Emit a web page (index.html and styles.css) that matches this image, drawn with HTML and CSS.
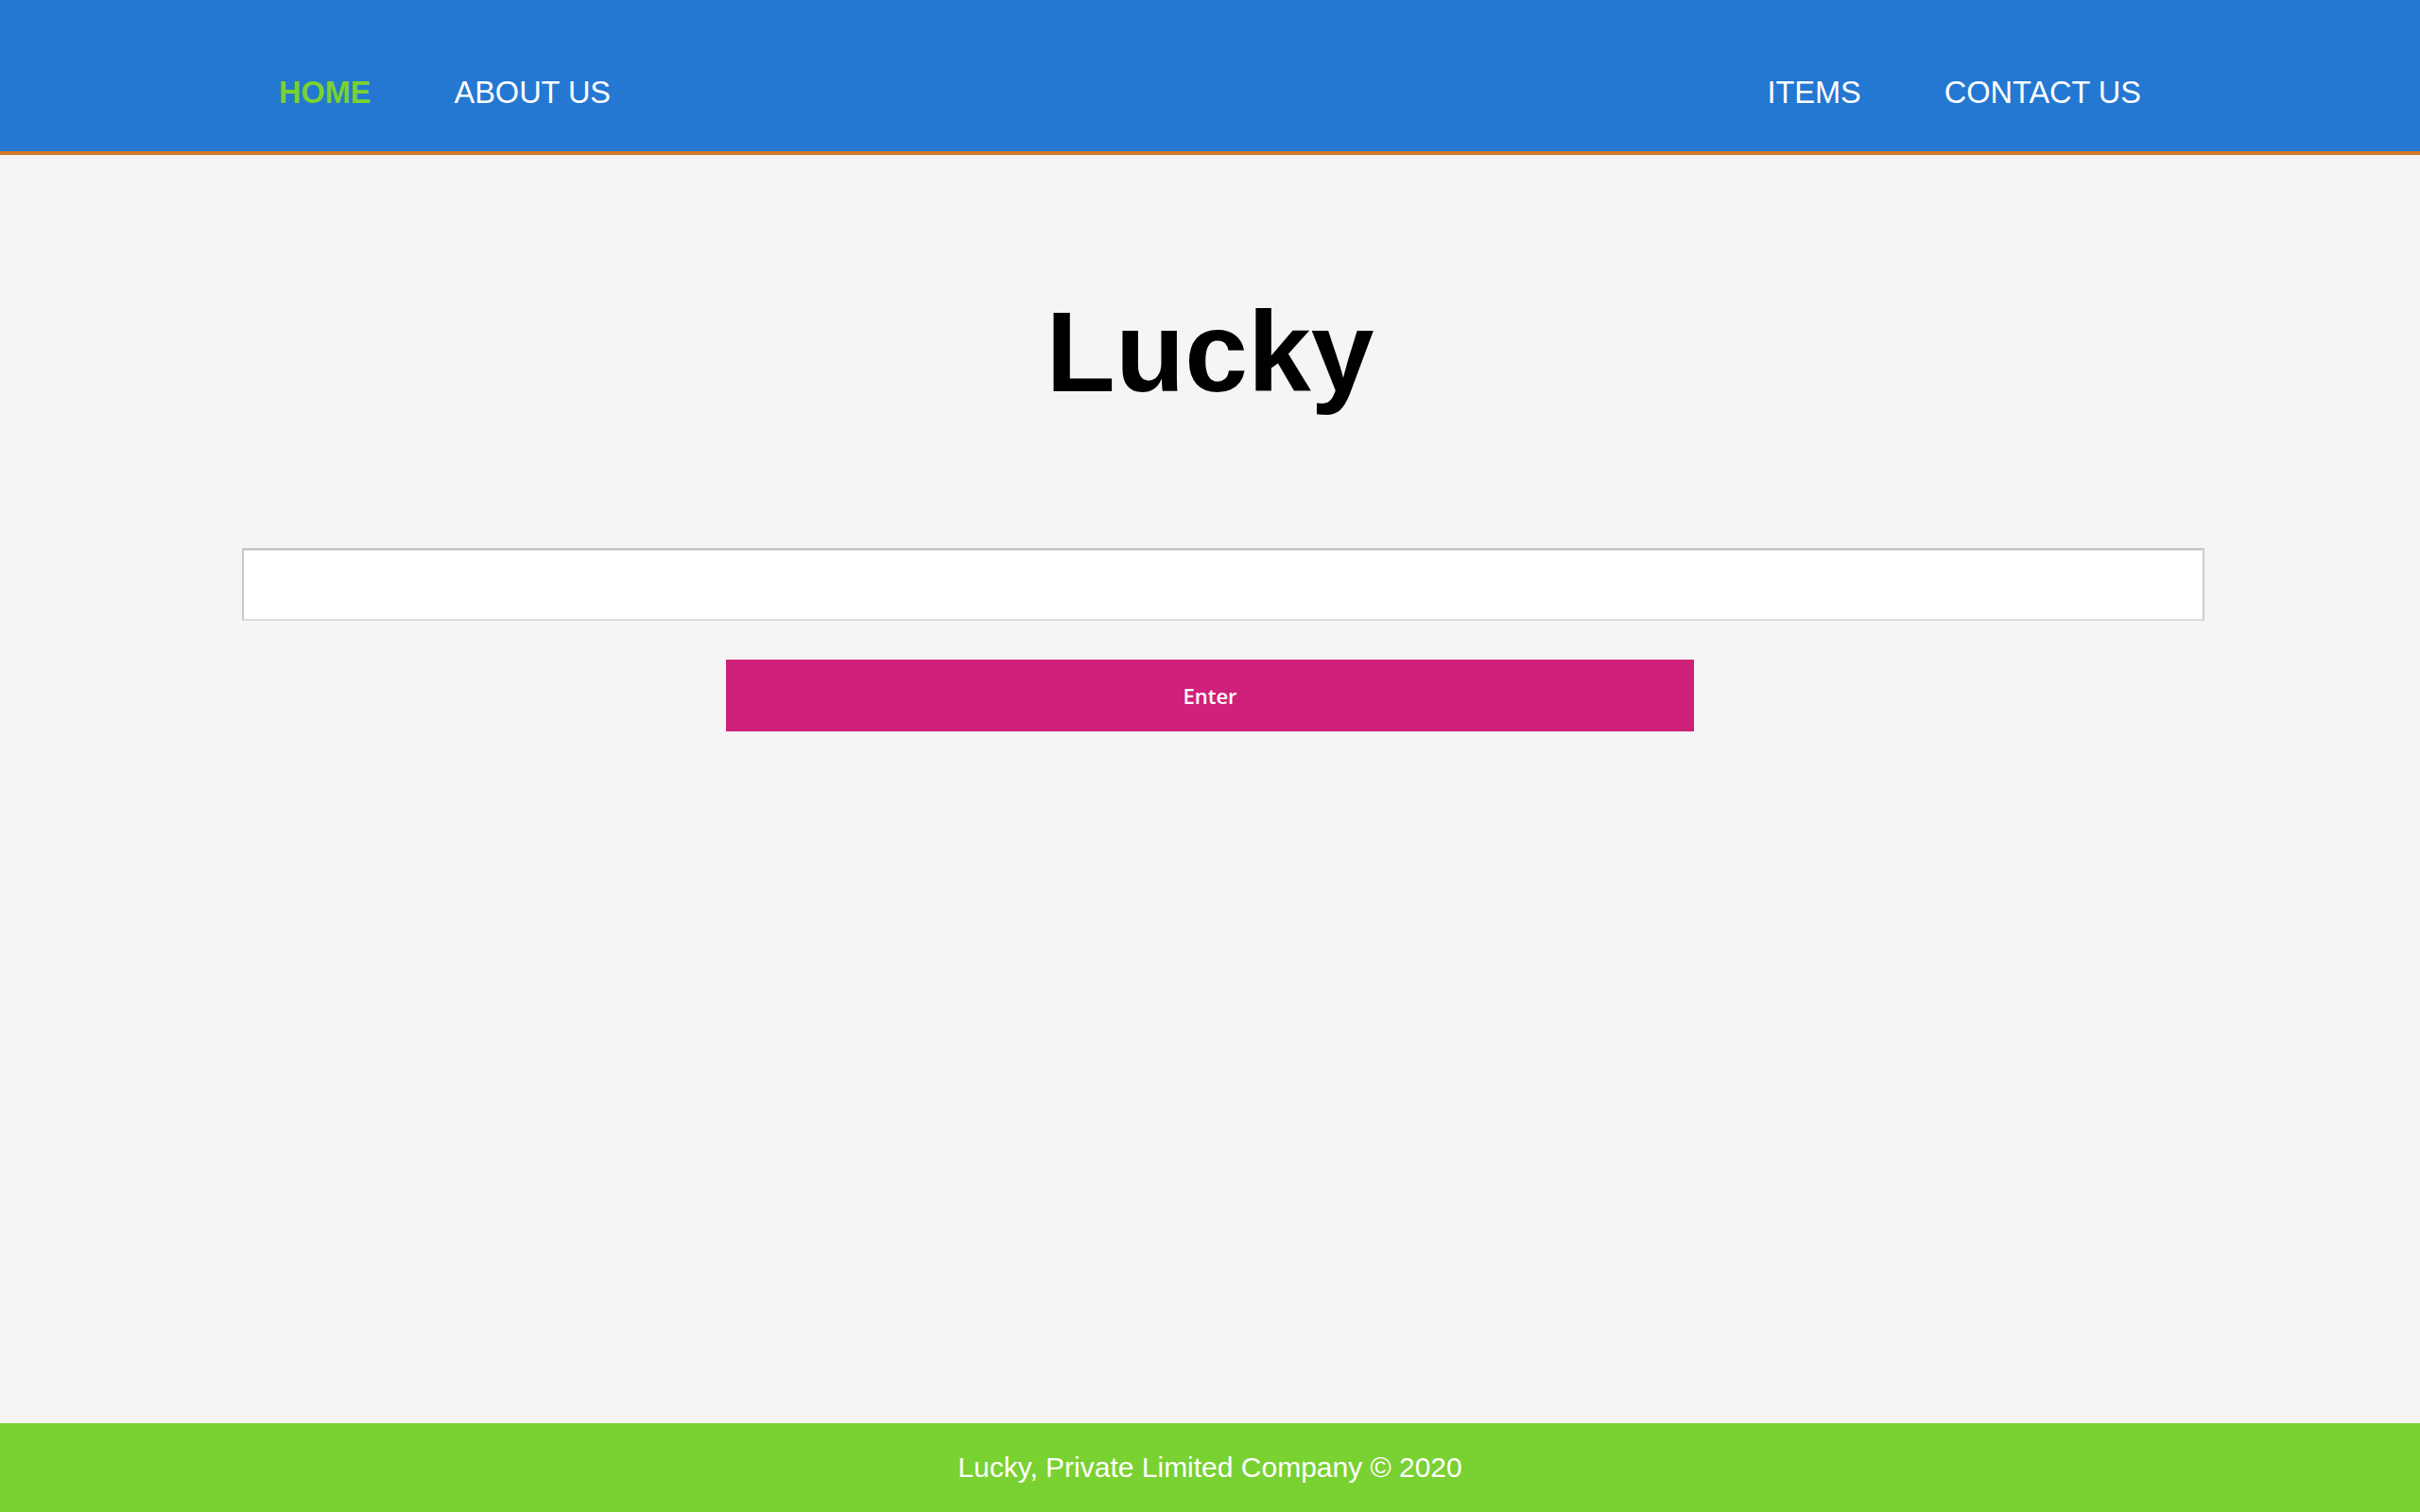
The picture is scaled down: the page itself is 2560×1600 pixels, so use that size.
FILE: index.html
```html
<!DOCTYPE html>
<html lang="en">
<head>
<meta charset="utf-8">
<title>Lucky</title>
<link rel="stylesheet" href="styles.css">
</head>
<body>
<header class="site-header">
  <nav class="nav">
    <div class="nav-group">
      <a class="nav-link active" href="#">HOME</a>
      <a class="nav-link" href="#">ABOUT US</a>
    </div>
    <div class="nav-group">
      <a class="nav-link" href="#">ITEMS</a>
      <a class="nav-link" href="#">CONTACT US</a>
    </div>
  </nav>
</header>
<main class="main">
  <h1 class="title">Lucky</h1>
  <form class="search" onsubmit="return false;">
    <input class="search-input" type="text">
    <button class="search-button" type="submit">Enter</button>
  </form>
</main>
<footer class="site-footer">Lucky, Private Limited Company © 2020</footer>
</body>
</html>
```

FILE: styles.css
```css
html, body {
  margin: 0;
  padding: 0;
}

body {
  background: #f5f5f5;
  font-family: "Liberation Sans", Arial, Helvetica, sans-serif;
  min-height: 100vh;
  display: flex;
  flex-direction: column;
}

.site-header {
  background: #2478d1;
  height: 160px;
  border-bottom: 4px solid #d3782a;
  box-sizing: content-box;
}

.nav {
  width: 2058px;
  margin: 0 auto;
  padding-top: 78px;
  display: flex;
  justify-content: space-between;
}

.nav-group {
  display: flex;
}

.nav-link {
  color: #ffffff;
  text-decoration: none;
  font-size: 32.5px;
  line-height: 40px;
  padding: 0 44px;
}

.nav-link.active {
  color: #7ad132;
  font-weight: bold;
}

.main {
  flex: 1;
  width: 2048px;
  margin: 0 auto;
  padding-top: 139px;
}

.title {
  margin: 0;
  text-align: center;
  font-size: 120px;
  font-weight: bold;
  color: #000000;
  line-height: normal;
}

.search {
  margin-top: 139px;
  display: flex;
  flex-direction: column;
  align-items: center;
}

.search-input {
  display: block;
  align-self: flex-start;
  width: 100%;
  height: 49px;
  padding: 12px;
  margin: 0;
  border: 2px solid #d2d2d2;
  border-top-color: #c4c4c4;
  border-left-color: #c9c9c9;
  border-right-color: #cdcdcd;
  border-bottom-color: #d9d9d9;
  box-shadow: inset 0 1px 0 #e6e6e6;
  background: #ffffff;
  font-size: 28px;
  outline: none;
}

.search-button {
  margin-top: 41px;
  width: 1024px;
  height: 76px;
  border: none;
  background: #d0217a;
  color: #ffffff;
  font-family: "Open Sans", "Noto Sans", sans-serif;
  font-weight: 600;
  font-size: 22px;
  cursor: pointer;
}

.site-footer {
  background: #7ad132;
  height: 94px;
  color: #ffffff;
  font-size: 30px;
  display: flex;
  align-items: center;
  justify-content: center;
}
```
